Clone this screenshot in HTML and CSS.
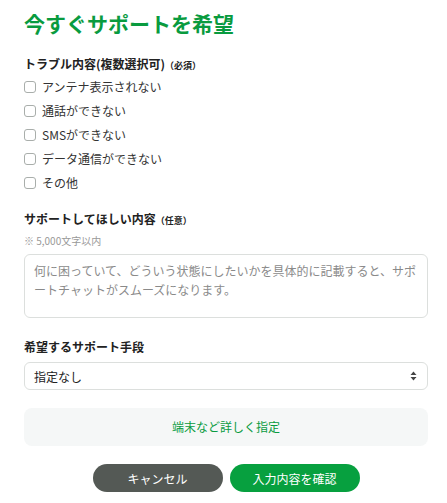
FILE: index.html
```html
<!DOCTYPE html>
<html lang="ja">
<head>
    <meta charset="UTF-8">
    <meta name="viewport" content="width=device-width, initial-scale=1.0">
    <title>今すぐサポートを希望</title>
    <link rel="stylesheet" href="styles.css">
</head>
<body>

<div class="container">
    <h1>今すぐサポートを希望</h1>

    <div class="label">トラブル内容(複数選択可)<span class="tag">（必須）</span></div>
    <div class="checks">
        <label class="check"><input type="checkbox"> アンテナ表示されない</label>
        <label class="check"><input type="checkbox"> 通話ができない</label>
        <label class="check"><input type="checkbox"> SMSができない</label>
        <label class="check"><input type="checkbox"> データ通信ができない</label>
        <label class="check"><input type="checkbox"> その他</label>
    </div>

    <div class="label label-gap">サポートしてほしい内容<span class="tag">（任意）</span></div>
    <div class="note">※ 5,000文字以内</div>
    <textarea class="detail" placeholder="何に困っていて、どういう状態にしたいかを具体的に記載すると、サポートチャットがスムーズになります。"></textarea>

    <div class="label label-gap2">希望するサポート手段</div>
    <div class="select-wrap">
        <select class="method">
            <option>指定なし</option>
            <option>チャット</option>
            <option>電話</option>
        </select>
        <svg class="select-arrow" width="7" height="10" viewBox="0 0 7 10">
            <path d="M3.5 0.5 L6.5 4 L0.5 4 Z" fill="#444"/>
            <path d="M3.5 9.5 L6.5 6 L0.5 6 Z" fill="#444"/>
        </svg>
    </div>

    <div class="more">端末など詳しく指定</div>

    <div class="actions">
        <button class="btn btn-cancel">キャンセル</button>
        <button class="btn btn-confirm">入力内容を確認</button>
    </div>
</div>

</body>
</html>
```

FILE: styles.css
```css
body {
    font-family: "Noto Sans CJK JP", "Noto Sans", sans-serif;
    background-color: #fff;
    color: #333;
    margin: 0;
    padding: 0;
}
.container {
    padding: 0 19px 0 24px;
}
h1 {
    font-size: 21px;
    line-height: 28px;
    font-weight: bold;
    color: #099b3f;
    margin: 9px 0 0;
}
.label {
    height: 18px;
    font-size: 12px;
    line-height: 18px;
    font-weight: bold;
    color: #222;
    margin-top: 18px;
}
.label-gap {
    margin-top: 15px;
}
.label-gap2 {
    margin-top: 20px;
}
.tag {
    font-size: 9px;
    line-height: 0;
}
.checks {
    margin-top: 2px;
}
.check {
    display: flex;
    align-items: center;
    height: 24px;
    font-size: 12px;
    line-height: 16px;
    color: #333;
    cursor: pointer;
}
.check input {
    appearance: none;
    width: 12px;
    height: 12px;
    margin: 0 6px 0 0;
    border: 1px solid #a9aeab;
    border-radius: 3px;
    background: #fff;
}
.check input:checked {
    background: #099b3f;
    border-color: #099b3f;
}
.note {
    height: 14px;
    font-size: 10px;
    line-height: 14px;
    color: #999;
    margin-top: 6px;
}
.detail {
    display: block;
    box-sizing: border-box;
    width: 100%;
    height: 64px;
    margin-top: 6px;
    padding: 6px 8px 6px 9px;
    border: 1px solid #dcdfdd;
    border-radius: 6px;
    font-family: inherit;
    font-size: 12px;
    line-height: 19px;
    color: #333;
    resize: none;
    outline: none;
}
.detail::placeholder {
    color: #8a8a8a;
}
.select-wrap {
    position: relative;
    margin-top: 6px;
}
.method {
    appearance: none;
    display: block;
    box-sizing: border-box;
    width: 100%;
    height: 28px;
    padding: 0 24px 0 9px;
    border: 1px solid #dcdfdd;
    border-radius: 6px;
    background: #fff;
    font-family: inherit;
    font-size: 12px;
    color: #222;
    outline: none;
}
.select-arrow {
    position: absolute;
    right: 11px;
    top: 9px;
    pointer-events: none;
}
.more {
    margin-top: 18px;
    height: 38px;
    line-height: 38px;
    background: #f5f7f7;
    border-radius: 8px;
    text-align: center;
    font-size: 12px;
    color: #099b3f;
    cursor: pointer;
}
.actions {
    display: flex;
    justify-content: center;
    gap: 7px;
    margin-top: 18px;
}
.btn {
    width: 130px;
    height: 28px;
    border: none;
    border-radius: 14px;
    color: #fff;
    font-family: inherit;
    font-size: 12px;
    cursor: pointer;
}
.btn-cancel {
    background: #545955;
}
.btn-confirm {
    background: #07a03f;
}
```
